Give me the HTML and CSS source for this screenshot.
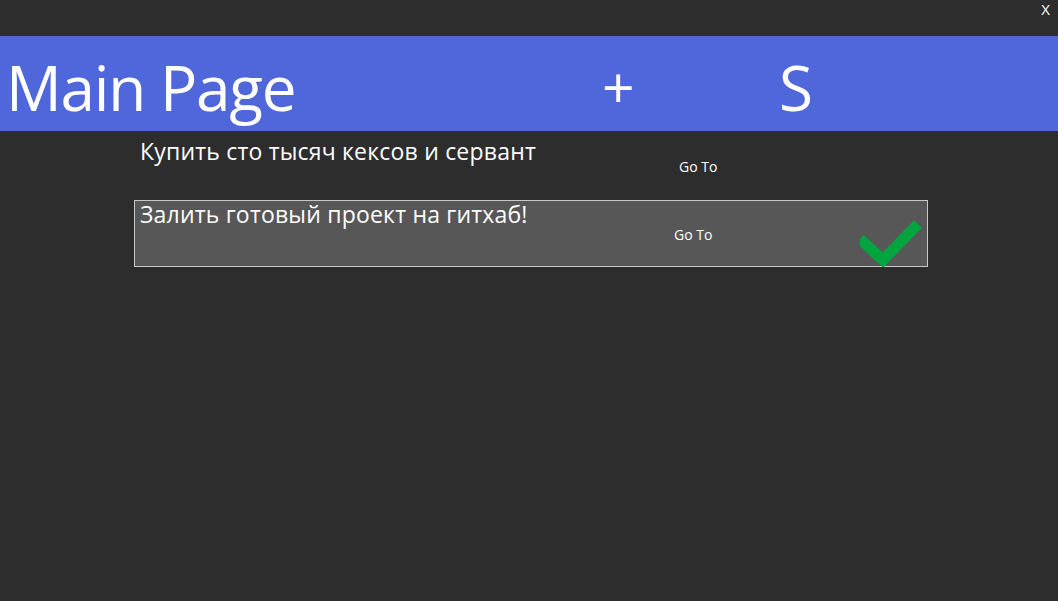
FILE: index.html
```html
<!DOCTYPE html>
<html lang="ru">
<head>
<meta charset="utf-8">
<title>Main Page</title>
<link rel="stylesheet" href="styles.css">
</head>
<body>
<div class="topbar"><span class="close">X</span></div>
<header class="header">
  <h1 class="title">Main Page</h1>
  <span class="action add">+</span>
  <span class="action save">S</span>
</header>
<main class="list">
  <div class="item item-first">
    <span class="item-text">Купить сто тысяч кексов и сервант</span>
    <span class="goto goto-plain">Go To</span>
  </div>
  <div class="item item-selected">
    <span class="item-text">Залить готовый проект на гитхаб!</span>
    <span class="goto">Go To</span>
    <svg class="check" width="66" height="49" viewBox="0 0 66 49">
      <polyline points="0,21 23,42 58,6" fill="none" stroke="#00a540" stroke-width="11"/>
    </svg>
  </div>
</main>
</body>
</html>
```
FILE: styles.css
```css
html, body {
  margin: 0;
  padding: 0;
  height: 100%;
}
body {
  background: #2d2d2d;
  color: #ffffff;
  font-family: "Open Sans", "Noto Sans", sans-serif;
  overflow: hidden;
}
.topbar {
  height: 36px;
  display: flex;
  justify-content: flex-end;
}
.close {
  font-size: 15px;
  line-height: 16px;
  padding-right: 8px;
  padding-top: 1px;
}
.header {
  height: 95px;
  box-sizing: border-box;
  padding-top: 6px;
  background: #5066db;
  display: flex;
  align-items: center;
}
.title {
  margin: 0 0 0 6px;
  font-weight: 400;
  font-size: 62px;
  line-height: 1;
  width: 596px;
  letter-spacing: -1.2px;
}
.action {
  font-size: 62px;
  line-height: 1;
}
.add {
  font-size: 57px;
  width: 177px;
}
.list {
  padding-left: 134px;
  width: 794px;
}
.item {
  position: relative;
  height: 67px;
  box-sizing: border-box;
  border: 1px solid transparent;
  padding: 0 0 0 5px;
  display: flex;
  align-items: flex-start;
}
.item-first {
  height: 69px;
  padding-top: 6px;
}
.item-selected {
  background: #575757;
  border-color: #c8c8c8;
}
.item-text {
  font-size: 23px;
  line-height: 26px;
  width: 534px;
  letter-spacing: 0.2px;
}
.goto {
  font-size: 14px;
  margin-top: 24px;
}
.goto-plain {
  margin-left: 5px;
  margin-top: 19px;
}
.check {
  position: absolute;
  left: 725px;
  top: 17px;
  overflow: hidden;
}
```
